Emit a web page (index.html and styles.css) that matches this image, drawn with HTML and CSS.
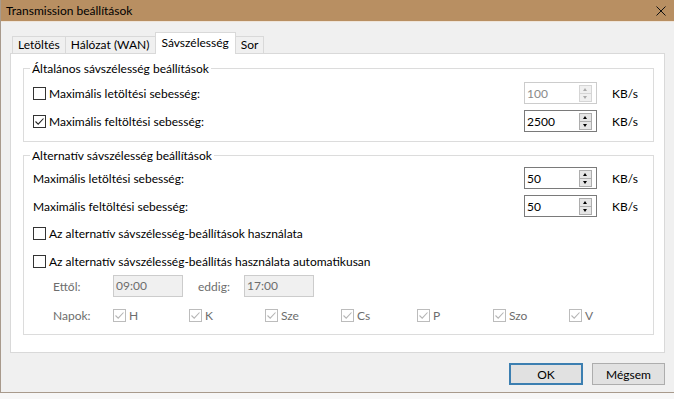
FILE: index.html
```html
<!DOCTYPE html>
<html lang="hu">
<head>
  <meta charset="UTF-8">
  <title>Transmission beállítások</title>
  <link rel="stylesheet" href="styles.css">
</head>
<body>
  <div class="window">
    <div class="titlebar">
      <span class="title">Transmission beállítások</span>
      <svg class="close" width="10" height="10" viewBox="0 0 10 10">
        <path d="M0.5 0.5 L9.5 9.5 M9.5 0.5 L0.5 9.5" stroke="#111" stroke-width="1" fill="none"/>
      </svg>
    </div>

    <div class="client">
      <div class="tabs">
        <div class="tab">Letöltés</div>
        <div class="tab">Hálózat (WAN)</div>
        <div class="tab active">Sávszélesség</div>
        <div class="tab">Sor</div>
      </div>

      <div class="panel">
        <fieldset class="group first">
          <legend>Általános sávszélesség beállítások</legend>
          <div class="row">
            <label class="check"><span class="box"></span>Maximális letöltési sebesség:</label>
            <div class="spin disabled"><span class="value">100</span><span class="arrows"><span class="up"></span><span class="down"></span></span></div>
            <span class="unit">KB/s</span>
          </div>
          <div class="row">
            <label class="check"><span class="box checked"><svg width="11" height="11" viewBox="0 0 11 11"><path d="M1.5 5.5 L4.2 8.2 L9.5 2.5" stroke="#222" stroke-width="1.1" fill="none"/></svg></span>Maximális feltöltési sebesség:</label>
            <div class="spin"><span class="value">2500</span><span class="arrows"><span class="up"></span><span class="down"></span></span></div>
            <span class="unit">KB/s</span>
          </div>
        </fieldset>

        <fieldset class="group second">
          <legend>Alternatív sávszélesség beállítások</legend>
          <div class="row">
            <span class="label">Maximális letöltési sebesség:</span>
            <div class="spin"><span class="value">50</span><span class="arrows"><span class="up"></span><span class="down"></span></span></div>
            <span class="unit">KB/s</span>
          </div>
          <div class="row">
            <span class="label">Maximális feltöltési sebesség:</span>
            <div class="spin"><span class="value">50</span><span class="arrows"><span class="up"></span><span class="down"></span></span></div>
            <span class="unit">KB/s</span>
          </div>
          <div class="row option">
            <label class="check"><span class="box"></span>Az alternatív sávszélesség-beállítások használata</label>
          </div>
          <div class="row">
            <label class="check"><span class="box"></span>Az alternatív sávszélesség-beállítás használata automatikusan</label>
          </div>
          <div class="row schedule">
            <span class="sub-label">Ettől:</span>
            <span class="time">09:00</span>
            <span class="until">eddig:</span>
            <span class="time">17:00</span>
          </div>
          <div class="row days">
            <span class="sub-label">Napok:</span>
            <label class="day"><span class="box checked disabled"><svg width="11" height="11" viewBox="0 0 11 11"><path d="M1.5 5.5 L4.2 8.2 L9.5 2.5" stroke="#b5b5b5" stroke-width="1.1" fill="none"/></svg></span>H</label>
            <label class="day"><span class="box checked disabled"><svg width="11" height="11" viewBox="0 0 11 11"><path d="M1.5 5.5 L4.2 8.2 L9.5 2.5" stroke="#b5b5b5" stroke-width="1.1" fill="none"/></svg></span>K</label>
            <label class="day"><span class="box checked disabled"><svg width="11" height="11" viewBox="0 0 11 11"><path d="M1.5 5.5 L4.2 8.2 L9.5 2.5" stroke="#b5b5b5" stroke-width="1.1" fill="none"/></svg></span>Sze</label>
            <label class="day"><span class="box checked disabled"><svg width="11" height="11" viewBox="0 0 11 11"><path d="M1.5 5.5 L4.2 8.2 L9.5 2.5" stroke="#b5b5b5" stroke-width="1.1" fill="none"/></svg></span>Cs</label>
            <label class="day"><span class="box checked disabled"><svg width="11" height="11" viewBox="0 0 11 11"><path d="M1.5 5.5 L4.2 8.2 L9.5 2.5" stroke="#b5b5b5" stroke-width="1.1" fill="none"/></svg></span>P</label>
            <label class="day"><span class="box checked disabled"><svg width="11" height="11" viewBox="0 0 11 11"><path d="M1.5 5.5 L4.2 8.2 L9.5 2.5" stroke="#b5b5b5" stroke-width="1.1" fill="none"/></svg></span>Szo</label>
            <label class="day"><span class="box checked disabled"><svg width="11" height="11" viewBox="0 0 11 11"><path d="M1.5 5.5 L4.2 8.2 L9.5 2.5" stroke="#b5b5b5" stroke-width="1.1" fill="none"/></svg></span>V</label>
          </div>
        </fieldset>
      </div>

      <div class="buttons">
        <button class="btn default">OK</button>
        <button class="btn">Mégsem</button>
      </div>
    </div>
  </div>
</body>
</html>
```

FILE: styles.css
```css
* {
  box-sizing: border-box;
}

body {
  margin: 0;
  background: #f7f7f7;
  font-family: Lato, "Noto Sans", sans-serif;
  font-size: 12px;
  color: #000;
}

.window {
  width: 674px;
  height: 393px;
  background: #f0f0f0;
  border-left: 1px solid #a89a8c;
  border-bottom: 1px solid #a89a8c;
}

.titlebar {
  height: 22px;
  background: #b88f62;
  border-bottom: 1px solid #efe4d8;
  display: flex;
  align-items: center;
  justify-content: space-between;
  padding: 0 8px 0 5px;
}

.client {
  padding: 10px 9px 0 9px;
}

/* tabs */
.tabs {
  display: flex;
  align-items: flex-end;
  height: 21px;
  padding-left: 3px;
}

.tab {
  height: 17px;
  line-height: 16px;
  padding: 0 5px;
  border: 1px solid #d9d9d9;
  border-bottom: none;
  margin-left: -1px;
  background: #f0f0f0;
}

.tab.active {
  position: relative;
  height: 22px;
  line-height: 19px;
  padding: 0 6px;
  margin-bottom: -1px;
  background: #fff;
  z-index: 1;
}

.panel {
  height: 300px;
  background: #fff;
  border: 1px solid #d9d9d9;
  padding: 7px 10px 0 12px;
}

/* groups */
.group {
  margin: 0;
  padding: 0 0 0 9px;
  border: 1px solid #dcdcdc;
  min-width: 0;
}

.group legend {
  padding: 0 2px;
  margin-left: -3px;
  line-height: 15px;
}

.group.first {
  padding-top: 6px;
  padding-bottom: 9px;
}

.group.second {
  margin-top: 6px;
  padding-top: 4px;
  padding-bottom: 8px;
}

.row {
  display: flex;
  align-items: center;
  height: 22px;
}

.row + .row {
  margin-top: 6px;
}

.row.option {
  margin-top: 5px;
}

.row.schedule {
  margin-top: 3px;
}

.row.days {
  margin-top: 7px;
}

.check,
.label {
  flex: 1;
  display: flex;
  align-items: center;
}

.box {
  width: 13px;
  height: 13px;
  border: 1px solid #333;
  background: #fff;
  margin-right: 3px;
  display: flex;
  align-items: center;
  justify-content: center;
  flex: none;
}

.box.disabled {
  border-color: #bcbcbc;
}

/* spin boxes */
.spin {
  width: 73px;
  height: 22px;
  border: 1px solid #7a7a7a;
  background: #fff;
  display: flex;
  align-items: center;
  justify-content: space-between;
  padding-left: 2px;
}

.spin.disabled {
  border-color: #cccccc;
  color: #8a8a8a;
}

.arrows {
  display: flex;
  flex-direction: column;
  margin-right: 4px;
}

.arrows span {
  width: 13px;
  height: 9px;
  border: 1px solid #adadad;
  background: #e5e5e5;
  position: relative;
}

.arrows .down {
  margin-top: -1px;
}

.arrows span::after {
  content: "";
  position: absolute;
  left: 3px;
  top: 2px;
  border-left: 2.5px solid transparent;
  border-right: 2.5px solid transparent;
}

.arrows .up::after {
  border-bottom: 3px solid #000;
}

.arrows .down::after {
  border-top: 3px solid #000;
}

.spin.disabled .arrows span {
  border-color: #d5d5d5;
  background: #f0f0f0;
}

.spin.disabled .arrows .up::after {
  border-bottom-color: #aaa;
}

.spin.disabled .arrows .down::after {
  border-top-color: #aaa;
}

.unit {
  width: 41px;
  margin-left: 15px;
}

/* schedule */
.sub-label {
  width: 80px;
  padding-left: 20px;
  color: #6d6d6d;
}

.time {
  width: 70px;
  height: 22px;
  line-height: 20px;
  padding-left: 2px;
  border: 1px solid #cccccc;
  background: #f0f0f0;
  color: #6d6d6d;
}

.until {
  width: 61px;
  padding-left: 15px;
  color: #6d6d6d;
}

.day {
  width: 76px;
  display: flex;
  align-items: center;
  color: #6d6d6d;
}

/* buttons */
.buttons {
  display: flex;
  justify-content: flex-end;
  gap: 9px;
  margin-top: 10px;
}

.btn {
  width: 73px;
  height: 22px;
  font-family: inherit;
  font-size: 12px;
  background: #e1e1e1;
  border: 1px solid #adadad;
  padding: 0;
}

.btn.default {
  border: 2px solid #3c7fb1;
  width: 74px;
}
```
